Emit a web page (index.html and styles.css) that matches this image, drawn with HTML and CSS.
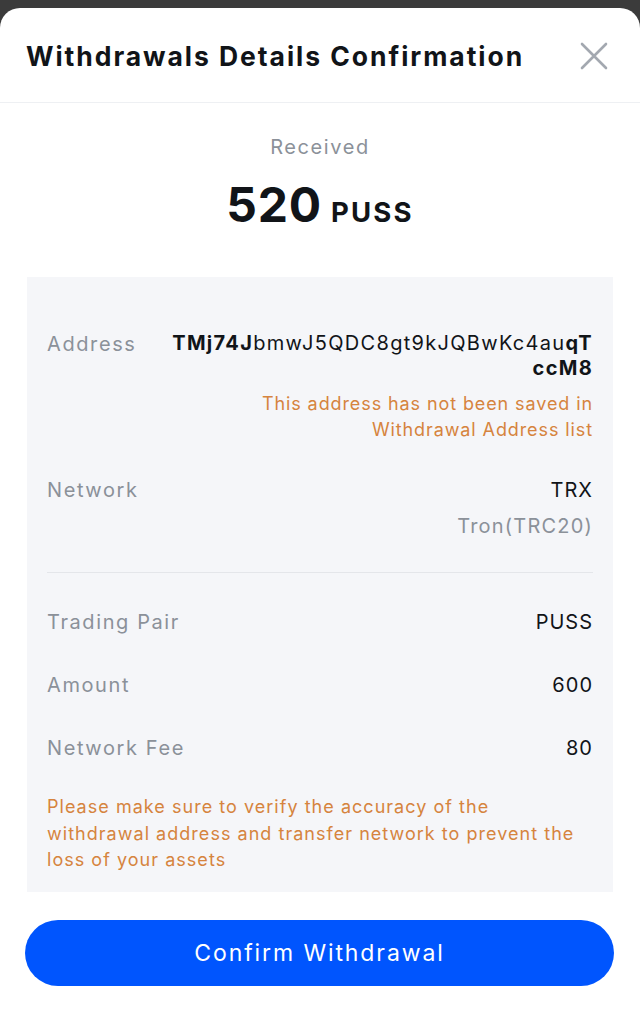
FILE: index.html
```html
<!DOCTYPE html>
<html lang="en">
<head>
<meta charset="utf-8">
<title>Withdrawals Details Confirmation</title>
<link rel="stylesheet" href="styles.css">
</head>
<body>
<div class="sheet">
  <header class="header">
    <h1 class="title">Withdrawals Details Confirmation</h1>
    <svg class="close" width="28" height="28" viewBox="0 0 28 28" aria-label="Close">
      <path d="M2 2 L26 26 M26 2 L2 26" stroke="#a3a8b0" stroke-width="2.6" stroke-linecap="round" fill="none"/>
    </svg>
  </header>

  <section class="summary">
    <div class="summary-label">Received</div>
    <div class="summary-amount"><span class="num">520</span><span class="unit">PUSS</span></div>
  </section>

  <section class="card">
    <div class="row row-top">
      <div class="label">Address</div>
      <div class="value-col">
        <div class="address"><b>TMj74J</b>bmwJ5QDC8gt9kJQBwKc4au<b>qT</b><br><b>ccM8</b></div>
        <div class="notice">This address has not been saved in<br>Withdrawal Address list</div>
      </div>
    </div>
    <div class="row row-top row-network">
      <div class="label">Network</div>
      <div class="value-col">
        <div class="value">TRX</div>
        <div class="sub">Tron(TRC20)</div>
      </div>
    </div>
    <div class="divider"></div>
    <div class="row row-simple">
      <div class="label">Trading Pair</div>
      <div class="value">PUSS</div>
    </div>
    <div class="row row-simple">
      <div class="label">Amount</div>
      <div class="value">600</div>
    </div>
    <div class="row row-simple">
      <div class="label">Network Fee</div>
      <div class="value">80</div>
    </div>
    <p class="warning">Please make sure to verify the accuracy of the<br>withdrawal address and transfer network to prevent the<br>loss of your assets</p>
  </section>

  <button class="confirm" type="button">Confirm Withdrawal</button>
</div>
</body>
</html>
```

FILE: styles.css
```css
* { box-sizing: border-box; }
html, body { margin: 0; padding: 0; }
body {
  background: #3b3b3b;
  font-family: Inter, "Noto Sans", "Liberation Sans", sans-serif;
}
.sheet {
  margin-top: 8px;
  background: #ffffff;
  border-radius: 20px 20px 0 0;
  min-height: 1018px;
  padding-bottom: 40px;
}
.header {
  height: 95px;
  border-bottom: 1px solid #eef0f3;
  display: flex;
  align-items: center;
  justify-content: space-between;
  padding: 0 32px 0 26px;
}
.title {
  margin: 0;
  font-size: 26.5px;
  font-weight: 700;
  color: #111418;
  letter-spacing: 1.95px;
  padding-top: 2px;
}
.close { display: block; margin-top: 2px; }

.summary {
  text-align: center;
  padding-top: 30px;
}
.summary-label {
  font-size: 20px;
  line-height: 28px;
  color: #8b9199;
  letter-spacing: 1.6px;
}
.summary-amount {
  margin-top: 16px;
  line-height: 56px;
  color: #111418;
  font-weight: 700;
}
.num { font-size: 48px; letter-spacing: 0.8px; }
.unit { font-size: 27.5px; margin-left: 9px; letter-spacing: 2.2px; }

.card {
  margin: 33px 27px 0 27px;
  background: #f5f6f9;
  padding: 54px 20px 18px 20px;
}
.row {
  display: flex;
  justify-content: space-between;
}
.row-top { align-items: flex-start; }
.row-network { margin-top: 34px; }
.row-simple { align-items: center; margin-top: 37px; }
.divider + .row-simple { margin-top: 36px; }
.label {
  font-size: 20px;
  line-height: 26px;
  color: #8b9199;
  letter-spacing: 1.6px;
  white-space: nowrap;
}
.value-col { text-align: right; }
.address {
  font-size: 20px;
  line-height: 25px;
  color: #111418;
  letter-spacing: 1.3px;
}
.address b { font-weight: 700; }
.notice {
  margin-top: 10px;
  font-size: 18px;
  line-height: 26px;
  color: #d6843e;
  letter-spacing: 0.9px;
}
.value {
  font-size: 20px;
  line-height: 26px;
  color: #111418;
  letter-spacing: 1px;
}
.sub {
  margin-top: 10px;
  font-size: 20px;
  line-height: 26px;
  color: #8b9199;
  letter-spacing: 1.2px;
}
.divider {
  height: 1px;
  background: #e4e6ea;
  margin-top: 33px;
}
.warning {
  margin: 33px 0 0 0;
  font-size: 18px;
  line-height: 26.5px;
  color: #d6843e;
  letter-spacing: 1.03px;
}
.confirm {
  display: block;
  margin: 28px 26px 0 25px;
  width: calc(100% - 51px);
  height: 66px;
  border: none;
  border-radius: 33px;
  background: #0055fe;
  color: #ffffff;
  font-family: Inter, "Noto Sans", "Liberation Sans", sans-serif;
  font-size: 23px;
  font-weight: 400;
  letter-spacing: 1.9px;
}
```
